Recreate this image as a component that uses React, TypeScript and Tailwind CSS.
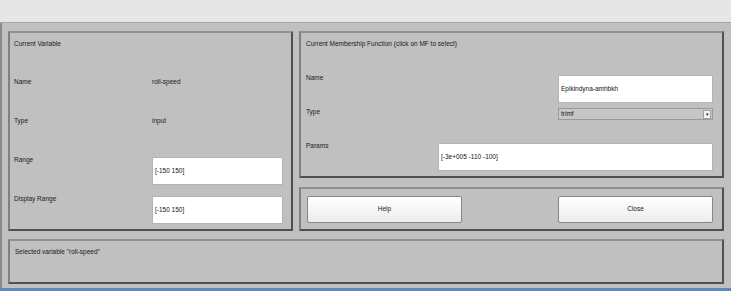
import React from "react";

const panel =
  "border-2 border-t-[#909090] border-l-[#808080] border-r-[#505050] border-b-[#505050] bg-[#c0c0c0]";
const box = "flex items-center bg-white border border-[#b4b4b4] px-[2px] text-[6.5px] text-[#111]";
const btn =
  "h-[27px] w-[155px] rounded-[2px] border border-[#7d8a96] bg-gradient-to-b from-white to-[#ececec] text-[6.5px] text-[#1a1a1a]";

export default function App() {
  return (
    <div
      className="flex h-[291px] w-[731px] flex-col overflow-hidden bg-[#c0c0c0] text-[6.5px] text-[#1a1a1a]"
      style={{ fontFamily: '"Liberation Sans", Arial, sans-serif' }}
    >
      <div className="h-[22px] bg-[#e6e6e6]" />
      <div className="h-px bg-[#a6a6a6]" />
      <div className="flex flex-1 flex-col border-l-2 border-[#8a8a8a] pl-[6px] pr-[7px] pt-[8px]">
        <div className="flex gap-[6px]">
          {/* current variable */}
          <div className={panel + " h-[200px] w-[285px] px-[4px] pt-[5px]"}>
            <div className="h-[12px] leading-[12px]">Current Variable</div>
            <div className="mt-[26px] grid grid-cols-[138px_131px] auto-rows-[39px]">
              <div className="leading-[12px]">Name</div>
              <div className="leading-[12px]">roll-speed</div>
              <div className="leading-[12px]">Type</div>
              <div className="leading-[12px]">input</div>
              <div className="leading-[12px]">Range</div>
              <div className={box + " mt-[3px] h-[28px]"}>[-150 150]</div>
              <div className="leading-[12px]">Display Range</div>
              <div className={box + " mt-[3px] h-[28px]"}>[-150 150]</div>
            </div>
          </div>
          {/* membership function */}
          <div className="flex w-[425px] flex-col gap-[9px]">
            <div className={panel + " h-[147px] px-[5px] pt-[5px]"}>
              <div className="h-[12px] leading-[12px]">Current Membership Function (click on MF to select)</div>
              <div className="mt-[22px] flex flex-col pr-[4px]">
                <div className="flex h-[34px] justify-between">
                  <div className="h-[12px] leading-[12px]">Name</div>
                  <div className={box + " mt-[3px] h-[28px] w-[155px]"}>Epikindyna-amhbkh</div>
                </div>
                <div className="flex h-[34px] justify-between">
                  <div className="h-[12px] leading-[12px]">Type</div>
                  <div className="mt-[2px] flex h-[12px] w-[155px] items-center justify-between border border-[#9a9a9a] bg-[#c6c6c6] pl-[2px] pr-px">
                    <span>trimf</span>
                    <span className="flex h-[9px] w-[8px] items-center justify-center border border-[#a0a0a0] bg-[#f4f4f4] text-[5px] leading-none">
                      ▾
                    </span>
                  </div>
                </div>
                <div className="flex h-[34px] justify-between">
                  <div className="h-[12px] leading-[12px]">Params</div>
                  <div className={box + " mt-[3px] h-[28px] w-[275px]"}>[-3e+005 -110 -100]</div>
                </div>
              </div>
            </div>
            <div className={panel + " flex h-[44px] items-center justify-between pl-[6px] pr-[9px]"}>
              <button className={btn}>Help</button>
              <button className={btn}>Close</button>
            </div>
          </div>
        </div>
        <div className={panel + " mt-[8px] h-[45px] px-[5px] pt-[5px]"}>
          <div className="h-[12px] leading-[12px]">Selected variable "roll-speed"</div>
        </div>
      </div>
      <div className="h-[3px] bg-[#6088b8]" />
    </div>
  );
}
